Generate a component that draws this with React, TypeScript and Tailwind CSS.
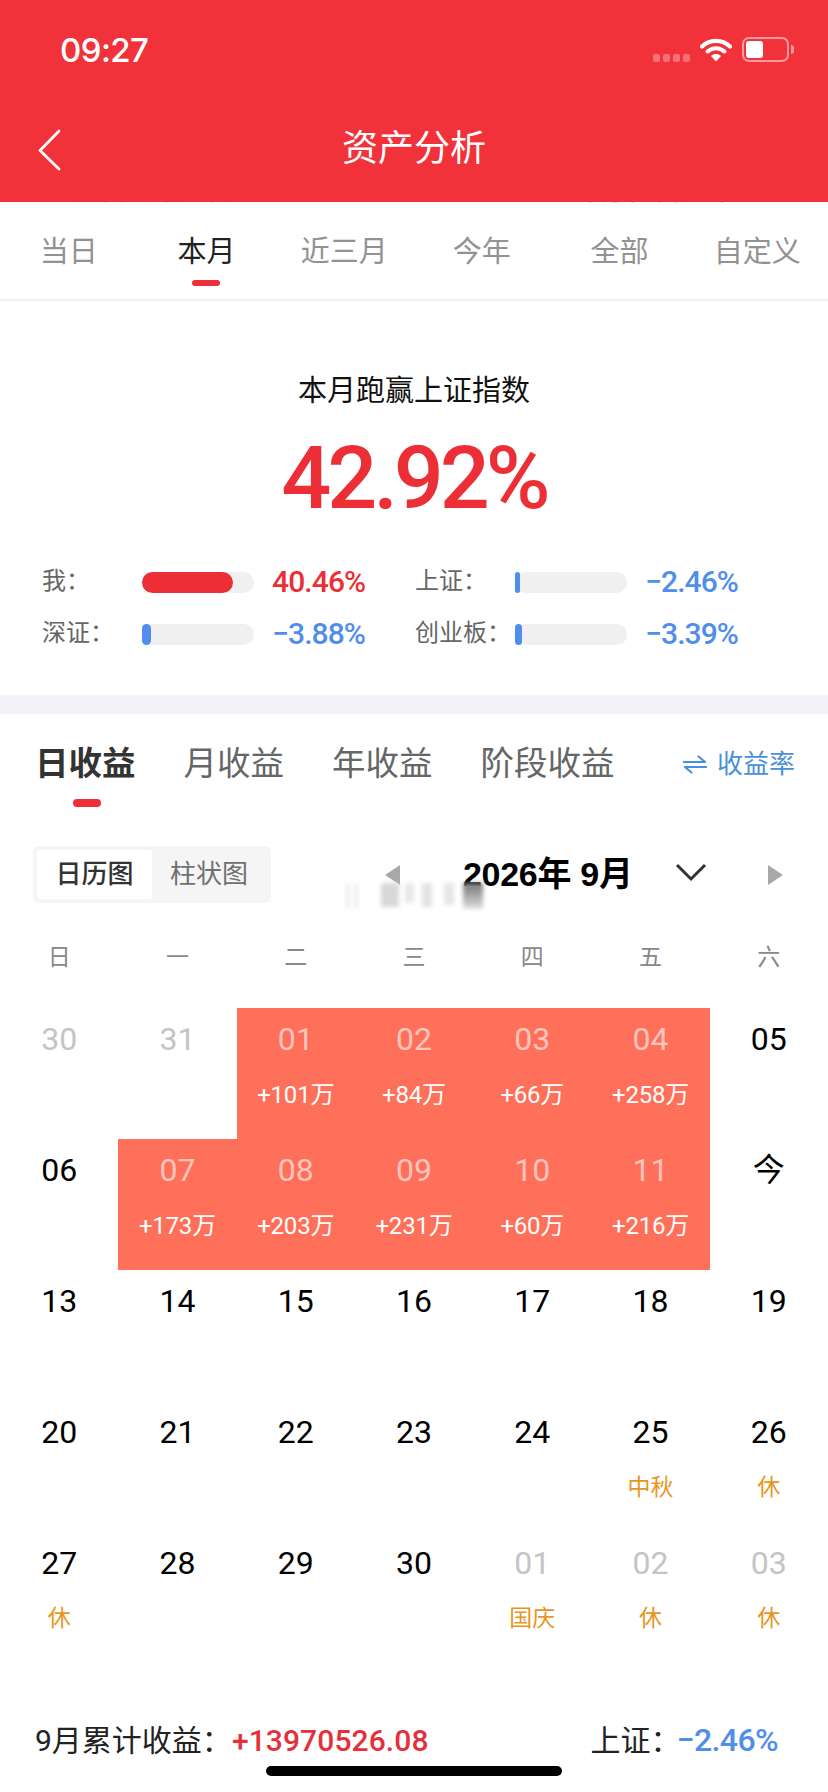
const cjk = "font-['Roboto','Noto_Sans_CJK_SC',sans-serif]";

type Cell = { d: string; sub?: string; kind?: 'muted' | 'hit' | 'normal'; note?: boolean };

const weeks: Cell[][] = [
  [
    { d: '30', kind: 'muted' },
    { d: '31', kind: 'muted' },
    { d: '01', sub: '+101万', kind: 'hit' },
    { d: '02', sub: '+84万', kind: 'hit' },
    { d: '03', sub: '+66万', kind: 'hit' },
    { d: '04', sub: '+258万', kind: 'hit' },
    { d: '05' },
  ],
  [
    { d: '06' },
    { d: '07', sub: '+173万', kind: 'hit' },
    { d: '08', sub: '+203万', kind: 'hit' },
    { d: '09', sub: '+231万', kind: 'hit' },
    { d: '10', sub: '+60万', kind: 'hit' },
    { d: '11', sub: '+216万', kind: 'hit' },
    { d: '今' },
  ],
  [{ d: '13' }, { d: '14' }, { d: '15' }, { d: '16' }, { d: '17' }, { d: '18' }, { d: '19' }],
  [
    { d: '20' },
    { d: '21' },
    { d: '22' },
    { d: '23' },
    { d: '24' },
    { d: '25', sub: '中秋', note: true },
    { d: '26', sub: '休', note: true },
  ],
  [
    { d: '27', sub: '休', note: true },
    { d: '28' },
    { d: '29' },
    { d: '30' },
    { d: '01', sub: '国庆', kind: 'muted', note: true },
    { d: '02', sub: '休', kind: 'muted', note: true },
    { d: '03', sub: '休', kind: 'muted', note: true },
  ],
];

function DayCell({ c }: { c: Cell }) {
  const hit = c.kind === 'hit';
  const num = hit ? 'text-white/60' : c.kind === 'muted' ? 'text-[#c4c4c4]' : 'text-black';
  return (
    <div className={`h-[131px] flex flex-col items-center ${hit ? 'bg-[#ff705a]' : ''}`}>
      <div className={`h-[62px] leading-[62px] text-[32px] ${num}`}>{c.d}</div>
      {c.sub && (
        <div
          className={`h-[50px] leading-[50px] ${
            c.note ? 'text-[23px] text-[#e8951d]' : 'text-[24px] text-white tracking-[-0.2px]'
          }`}
        >
          {c.sub}
        </div>
      )}
    </div>
  );
}

function Stat({ label, value, fill, red }: { label: string; value: string; fill: number; red?: boolean }) {
  return (
    <div className="flex items-center h-[52px]">
      <div className="w-[100px] text-[24px] text-[#666666] -mt-[3px]">{label}</div>
      <div className="w-[112px] h-[21px] rounded-full bg-[#f0f0f0]">
        <div
          className={`h-full rounded-full ${red ? 'bg-[#ec2f37]' : 'bg-[#4f8eea]'}`}
          style={{ width: `${fill}px` }}
        />
      </div>
      <div
        className={`ml-[18px] -mt-[2px] text-[30px] font-medium tracking-[-0.9px] ${
          red ? 'text-[#ec2f37]' : 'text-[#4f8eea]'
        }`}
      >
        {value}
      </div>
    </div>
  );
}

export default function App() {
  return (
    <div className={`w-[828px] h-[1792px] bg-white overflow-hidden ${cjk}`}>
      <header className="relative z-10 h-[202px] bg-[#f2323a] text-white">
        <div className="flex items-start h-[102px] pt-[33px] pl-[60px] pr-[34px]">
          <div className="text-[33px] leading-[34px] font-medium font-['Inter',sans-serif] tracking-[-0.6px]">09:27</div>
          <div className="ml-auto flex items-start">
            <div className="flex gap-[3px] mt-[21px] opacity-30">
              <span className="w-[7px] h-[8px] rounded-[2px] bg-white" />
              <span className="w-[7px] h-[8px] rounded-[2px] bg-white" />
              <span className="w-[7px] h-[8px] rounded-[2px] bg-white" />
              <span className="w-[7px] h-[8px] rounded-[2px] bg-white" />
            </div>
            <svg className="ml-[10px] mt-[5px]" width="32" height="24" viewBox="0 0 32 24" fill="none">
              <path d="M2 8.5C10 1 22 1 30 8.5" stroke="#fff" strokeWidth="4.2" strokeLinecap="round" />
              <path d="M7.5 13.5C12.5 9 19.5 9 24.5 13.5" stroke="#fff" strokeWidth="4" strokeLinecap="round" />
              <path d="M11 18c3-2.6 7-2.6 10 0l-5 5.5z" fill="#fff" />
            </svg>
            <div className="ml-[10px] mt-[4px] w-[47px] h-[25px] rounded-[7px] border-2 border-white/50 p-[2px]">
              <div className="w-[17px] h-full rounded-[3px] bg-white" />
            </div>
            <div className="mt-[12px] ml-[2px] w-[3px] h-[9px] rounded-r-[3px] bg-white/50" />
          </div>
        </div>
        <div className="relative h-[100px] flex items-start justify-center">
          <svg className="absolute left-[36px] top-[26px]" width="26" height="44" viewBox="0 0 26 44" fill="none">
            <path d="M23 3L4 22.5L23 41" stroke="#fff" strokeWidth="2.8" strokeLinecap="round" strokeLinejoin="round" />
          </svg>
          <div className="text-[36px] leading-[52px] mt-[21px]">资产分析</div>
        </div>
      </header>

      <nav className="relative h-[99px] border-b-2 border-[#f0f0f0]">
        <div className="absolute left-[70px] -top-[20px] h-[24px] text-[20px] leading-[24px] text-[#e4dcdc] tracking-[2px]">
          本月累计收益率表
        </div>
        <div className="absolute left-[580px] -top-[20px] h-[24px] text-[20px] leading-[24px] text-[#c8bcbc] tracking-[2px]">
          本月累计收益率
        </div>
        <div className="grid grid-cols-6 pr-[2px] pt-[30px] text-[29px] leading-[40px] text-[#929292]">
          <div className="text-center">当日</div>
          <div className="flex flex-col items-center text-[#222222]">
            本月
            <span className="mt-[8px] w-[28px] h-[6px] rounded-full bg-[#ee2f38]" />
          </div>
          <div className="text-center">近三月</div>
          <div className="text-center">今年</div>
          <div className="text-center">全部</div>
          <div className="text-center">自定义</div>
        </div>
      </nav>

      <section className="h-[394px] pt-[71px]">
        <div className="text-center text-[29px] leading-[38px] text-[#111111]">本月跑赢上证指数</div>
        <div className="mt-[18px] text-center text-[88px] leading-[100px] font-medium tracking-[-4px] text-[#ec2f37] font-['Roboto',sans-serif]">
          42.92%
        </div>
        <div className="mt-[28px] ml-[42px] grid grid-cols-[373px_1fr]">
          <Stat label="我：" value="40.46%" fill={91} red />
          <Stat label="上证：" value="−2.46%" fill={5} />
          <Stat label="深证：" value="−3.88%" fill={9} />
          <Stat label="创业板：" value="−3.39%" fill={7} />
        </div>
      </section>

      <div className="h-[19px] bg-[#f2f3f6]" />

      <section>
        <div className="mt-[25px] flex items-center h-[50px] pl-[35px] pr-[33px] gap-[48px] text-[33.5px] text-[#666666]">
          <div className="font-bold text-[#333333]">日收益</div>
          <div>月收益</div>
          <div>年收益</div>
          <div>阶段收益</div>
          <div className="ml-auto flex items-center gap-[10px] text-[26px] text-[#4a8fdc]">
            <svg width="24" height="20" viewBox="0 0 24 20" fill="none">
              <path d="M1 8H22L15.5 2.5" stroke="#4a8fdc" strokeWidth="2.2" strokeLinecap="round" strokeLinejoin="round" />
              <path d="M23 13H2L8.5 18.5" stroke="#4a8fdc" strokeWidth="2.2" strokeLinecap="round" strokeLinejoin="round" />
            </svg>
            收益率
          </div>
        </div>
        <div className="mt-[10px] ml-[73px] w-[28px] h-[8px] rounded-full bg-[#ee2f38]" />

        <div className="relative mt-[39px] h-[57px] flex items-center pl-[33px]">
          <div className="w-[238px] h-[57px] rounded-[6px] bg-[#f5f5f5] flex items-center p-[4px] text-[26px]">
            <div className="w-[115px] h-[49px] bg-white rounded-[3px] flex items-center justify-center font-medium text-[#333333]">
              日历图
            </div>
            <div className="flex-1 text-center text-[#707070] pr-[1px]">柱状图</div>
          </div>
          <svg className="ml-[114px]" width="16" height="20" viewBox="0 0 16 20">
            <path d="M15 0V20L0 10z" fill="#a8a8a8" />
          </svg>
          <div className="ml-[62px] w-[170px] text-[34px] font-bold text-black whitespace-nowrap tracking-[-0.3px] font-['Liberation_Sans','Noto_Sans_CJK_SC',sans-serif]">
            2026年 9月
          </div>
          <svg className="ml-[42px] -mt-[5px]" width="32" height="20" viewBox="0 0 32 20" fill="none">
            <path d="M2 3L16 17L30 3" stroke="#333333" strokeWidth="3" />
          </svg>
          <svg className="ml-[60px]" width="16" height="20" viewBox="0 0 16 20">
            <path d="M1 0V20L16 10z" fill="#a8a8a8" />
          </svg>
          <div className="absolute left-[347px] top-[37px] w-[140px] h-[26px] blur-[2px] flex items-start pointer-events-none">
            <span className="w-[10px] h-[26px] border-x-2 border-[#dddddd]" />
            <span className="ml-[24px] w-[18px] h-[24px] bg-[#d8d8d8]" />
            <span className="ml-[6px] w-[9px] h-[20px] bg-[#e8e8e8]" />
            <span className="ml-[8px] w-[10px] h-[24px] bg-[#e2e2e2]" />
            <span className="ml-[12px] w-[10px] h-[22px] bg-[#e6e6e6]" />
            <span className="ml-[9px] w-[20px] h-[26px] bg-gradient-to-b from-[#777777] to-[#e0e0e0]" />
          </div>
        </div>

        <div className="mt-[40px] grid grid-cols-7 text-center text-[23px] leading-[30px] text-[#888888]">
          <div>日</div>
          <div>一</div>
          <div>二</div>
          <div>三</div>
          <div>四</div>
          <div>五</div>
          <div>六</div>
        </div>

        <div className="mt-[35px] grid grid-cols-7">
          {weeks.flat().map((c, i) => (
            <DayCell key={i} c={c} />
          ))}
        </div>

        <div className="mt-[57px] h-[40px] flex items-center pl-[35px] pr-[50px] text-[30px] text-[#222222]">
          <span>9月累计收益：</span>
          <span className="font-medium text-[#e5303a] tracking-[0.1px]">+13970526.08</span>
          <span className="ml-auto -mr-[4px]">上证：</span>
          <span className="text-[32px] font-medium text-[#4f8eea] tracking-[-0.6px]">−2.46%</span>
        </div>
        <div className="mt-[6px] mx-auto w-[296px] h-[10px] rounded-full bg-black" />
      </section>
    </div>
  );
}
